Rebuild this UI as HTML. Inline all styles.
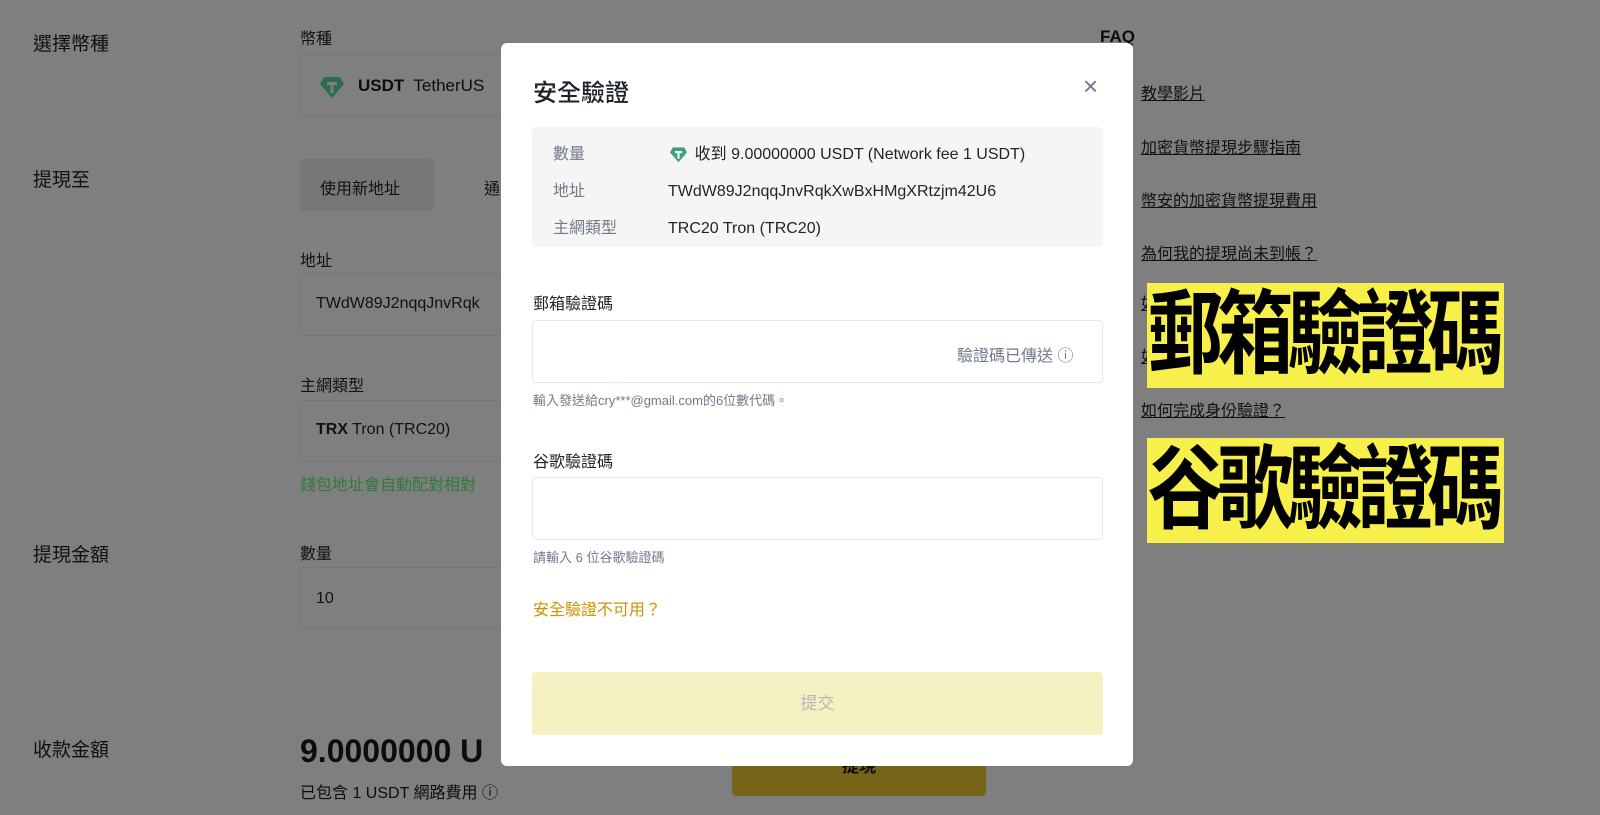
<!DOCTYPE html>
<html><head><meta charset="utf-8"><style>
*{margin:0;padding:0;box-sizing:border-box}
body{width:1600px;height:815px;overflow:hidden;background:#7f7f7f;font-family:"Liberation Sans","Noto Sans CJK TC",sans-serif;color:#0d0d0d;position:relative}
.a{position:absolute;white-space:nowrap}
.lbl{font-size:19px;color:#111}
.sm{font-size:16px;color:#111}
.box{position:absolute;border:1px solid #767676;border-radius:4px;background:#7f7f7f}
.faq{font-size:16px;color:#111;text-decoration:underline}
.modal{position:absolute;left:501px;top:43px;width:632px;height:723px;background:#fff;border-radius:6px}
.big{position:absolute;left:1147px;width:357px;height:105px;background:#f7f04a;font-weight:bold;font-size:76px;color:#000;line-height:105px;text-align:center;letter-spacing:-6px}
.big span{display:inline-block;transform:scaleY(1.2);margin-left:-6px}
</style></head><body>
<div class="a lbl" style="left:33px;top:29px">選擇幣種</div>
<div class="a lbl" style="left:33px;top:165px">提現至</div>
<div class="a lbl" style="left:33px;top:540px">提現金額</div>
<div class="a lbl" style="left:33px;top:735px">收款金額</div>
<div class="a sm" style="left:300px;top:25px">幣種</div>
<div class="box" style="left:300px;top:54px;width:220px;height:62px"></div>
<svg class="a" style="left:319px;top:75px" width="26" height="24" viewBox="0 0 26 24"><path d="M5 2h16l4 7-12 14L1 9z" fill="#2a6e4c"/><path d="M8 7h10v3h-3.5v8h-3v-8H8z" fill="#7f7f7f"/></svg>
<div class="a" style="left:358px;top:76px;font-size:17px"><b>USDT</b>&nbsp; TetherUS</div>
<div class="a" style="left:300px;top:159px;width:134px;height:52px;background:#777;border-radius:4px"></div>
<div class="a sm" style="left:320px;top:175px">使用新地址</div>
<div class="a sm" style="left:484px;top:175px">通</div>
<div class="a sm" style="left:300px;top:247px">地址</div>
<div class="box" style="left:300px;top:273px;width:220px;height:63px"></div>
<div class="a sm" style="left:316px;top:295px">TWdW89J2nqqJnvRqk</div>
<div class="a sm" style="left:300px;top:372px">主網類型</div>
<div class="box" style="left:300px;top:400px;width:220px;height:62px"></div>
<div class="a sm" style="left:316px;top:421px"><b>TRX</b> Tron (TRC20)</div>
<div class="a" style="left:300px;top:471px;font-size:16px;color:#2f7a3c">錢包地址會自動配對相對</div>
<div class="a sm" style="left:300px;top:540px">數量</div>
<div class="box" style="left:300px;top:567px;width:220px;height:62px"></div>
<div class="a sm" style="left:316px;top:590px">10</div>
<div class="a" style="left:300px;top:733px;font-size:32px;font-weight:bold">9.0000000 U</div>
<div class="a" style="left:300px;top:779px;font-size:16px">已包含 1 USDT 網路費用 ⓘ</div>
<div class="a" style="left:732px;top:752px;width:254px;height:44px;background:#776419;border-radius:4px;text-align:center;font-weight:bold;font-size:17px;line-height:30px">提現</div>

<div class="a" style="left:1100px;top:27px;font-size:17px;font-weight:bold">FAQ</div>
<div class="a faq" style="left:1141px;top:80px">教學影片</div>
<div class="a faq" style="left:1141px;top:134px">加密貨幣提現步驟指南</div>
<div class="a faq" style="left:1141px;top:187px">幣安的加密貨幣提現費用</div>
<div class="a faq" style="left:1141px;top:240px">為何我的提現尚未到帳？</div>
<div class="a faq" style="left:1141px;top:290px">如</div>
<div class="a faq" style="left:1141px;top:343px">如</div>
<div class="a faq" style="left:1141px;top:397px">如何完成身份驗證？</div>
<div class="big" style="top:283px"><span>郵箱驗證碼</span></div>
<div class="big" style="top:438px"><span>谷歌驗證碼</span></div>

<div class="modal">
<div class="a" style="left:32px;top:30px;font-size:24px;font-weight:500;color:#1e2329">安全驗證</div>
<div class="a" style="left:582px;top:28px;font-size:26px;color:#707a8a">×</div>
<div class="a" style="left:31px;top:84px;width:571px;height:120px;background:#f5f5f5;border-radius:4px"></div>
<div class="a" style="left:52px;top:93px;font-size:16px;color:#707a8a;line-height:37px">數量<br>地址<br>主網類型</div>
<svg class="a" style="left:168px;top:103px" width="19" height="17" viewBox="0 0 26 24"><path d="M5 2h16l4 7-12 14L1 9z" fill="#3ba37a"/><path d="M8 7h10v3h-3.5v8h-3v-8H8z" fill="#fff"/></svg>
<div class="a" style="left:167px;top:93px;font-size:16px;color:#1e2329;line-height:37px">&nbsp;&nbsp;&nbsp;&nbsp;&nbsp;&nbsp;收到 9.00000000 USDT (Network fee 1 USDT)<br>TWdW89J2nqqJnvRqkXwBxHMgXRtzjm42U6<br>TRC20 Tron (TRC20)</div>
<div class="a" style="left:32px;top:247px;font-size:16px;color:#1e2329">郵箱驗證碼</div>
<div class="a" style="left:31px;top:277px;width:571px;height:63px;border:1px solid #e6e8ea;border-radius:4px"></div>
<div class="a" style="left:456px;top:299px;font-size:16px;color:#707a8a">驗證碼已傳送 ⓘ</div>
<div class="a" style="left:32px;top:347px;font-size:13px;color:#707a8a">輸入發送給cry***@gmail.com的6位數代碼。</div>
<div class="a" style="left:32px;top:405px;font-size:16px;color:#1e2329">谷歌驗證碼</div>
<div class="a" style="left:31px;top:434px;width:571px;height:63px;border:1px solid #e6e8ea;border-radius:4px"></div>
<div class="a" style="left:32px;top:504px;font-size:13px;color:#707a8a">請輸入 6 位谷歌驗證碼</div>
<div class="a" style="left:32px;top:553px;font-size:16px;color:#c99400">安全驗證不可用？</div>
<div class="a" style="left:31px;top:629px;width:571px;height:63px;background:#f6f1c2;border-radius:4px;text-align:center;line-height:63px;font-size:17px;color:#b7b7b7">提交</div>
</div>
</body></html>
